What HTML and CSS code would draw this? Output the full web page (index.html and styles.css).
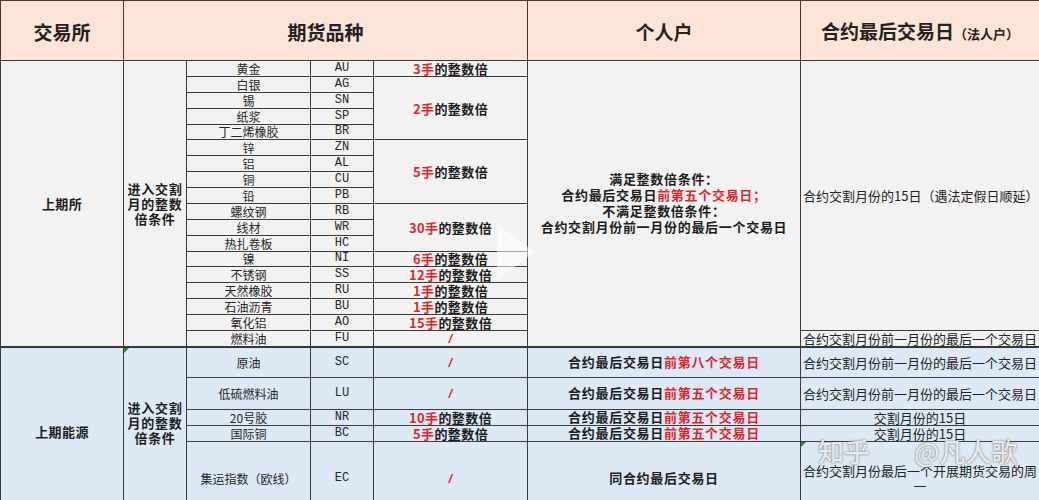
FILE: index.html
```html
<!DOCTYPE html>
<html lang="zh-CN">
<head>
<meta charset="utf-8">
<title>期货交割月持仓规定</title>
<link rel="stylesheet" href="styles.css">
</head>
<body>
<div class="sheet">
  <div class="grp hd">
    <div class="cell"><span>交易所</span></div>
    <div class="cell c4"><span>期货品种</span></div>
    <div class="cell"><span>个人户</span></div>
    <div class="cell"><span>合约最后交易日<span class="sm">（法人户）</span></span></div>
  </div>

  <div class="grp s1">
    <div class="cell r18 ex"><span>上期所</span></div>
    <div class="cell r18 cond"><span>进入交割月的整数倍条件</span></div>
    <div class="cell nm"><span>黄金</span></div><div class="cell cd"><span>AU</span></div><div class="cell mul"><span><span class="red">3手</span>的整数倍</span></div>
    <div class="cell r18 per"><span><span class="ln">满足整数倍条件：</span><span class="ln">合约最后交易日<span class="red">前第五个交易日；</span></span><span class="ln">不满足整数倍条件：</span><span class="ln">合约交割月份前一月份的最后一个交易日</span></span></div>
    <div class="cell r17 corp left"><span>合约交割月份的15日（遇法定假日顺延）</span></div>
    <div class="cell nm"><span>白银</span></div><div class="cell cd"><span>AG</span></div><div class="cell mul r4"><span><span class="red">2手</span>的整数倍</span></div>
    <div class="cell nm"><span>锡</span></div><div class="cell cd"><span>SN</span></div>
    <div class="cell nm"><span>纸浆</span></div><div class="cell cd"><span>SP</span></div>
    <div class="cell nm"><span>丁二烯橡胶</span></div><div class="cell cd"><span>BR</span></div>
    <div class="cell nm"><span>锌</span></div><div class="cell cd"><span>ZN</span></div><div class="cell mul r4"><span><span class="red">5手</span>的整数倍</span></div>
    <div class="cell nm"><span>铝</span></div><div class="cell cd"><span>AL</span></div>
    <div class="cell nm"><span>铜</span></div><div class="cell cd"><span>CU</span></div>
    <div class="cell nm"><span>铅</span></div><div class="cell cd"><span>PB</span></div>
    <div class="cell nm"><span>螺纹钢</span></div><div class="cell cd"><span>RB</span></div><div class="cell mul r3"><span><span class="red">30手</span>的整数倍</span></div>
    <div class="cell nm"><span>线材</span></div><div class="cell cd"><span>WR</span></div>
    <div class="cell nm"><span>热扎卷板</span></div><div class="cell cd"><span>HC</span></div>
    <div class="cell nm"><span>镍</span></div><div class="cell cd"><span>NI</span></div><div class="cell mul"><span><span class="red">6手</span>的整数倍</span></div>
    <div class="cell nm"><span>不锈钢</span></div><div class="cell cd"><span>SS</span></div><div class="cell mul"><span><span class="red">12手</span>的整数倍</span></div>
    <div class="cell nm"><span>天然橡胶</span></div><div class="cell cd"><span>RU</span></div><div class="cell mul"><span><span class="red">1手</span>的整数倍</span></div>
    <div class="cell nm"><span>石油沥青</span></div><div class="cell cd"><span>BU</span></div><div class="cell mul"><span><span class="red">1手</span>的整数倍</span></div>
    <div class="cell nm"><span>氧化铝</span></div><div class="cell cd"><span>AO</span></div><div class="cell mul"><span><span class="red">15手</span>的整数倍</span></div>
    <div class="cell nm"><span>燃料油</span></div><div class="cell cd"><span>FU</span></div><div class="cell mul"><span class="red slash">/</span></div>
    <div class="cell corp"><span>合约交割月份前一月份的最后一个交易日</span></div>
  </div>

  <div class="grp s2">
    <div class="cell r5 ex top"><span>上期能源</span></div>
    <div class="cell r5 cond top lift flag"><span>进入交割月的整数倍条件</span></div>
    <div class="cell nm top"><span>原油</span></div><div class="cell cd top"><span>SC</span></div><div class="cell mul top"><span class="red slash">/</span></div>
    <div class="cell per top"><span>合约最后交易日<span class="red">前第八个交易日</span></span></div>
    <div class="cell corp top"><span>合约交割月份前一月份的最后一个交易日</span></div>

    <div class="cell nm"><span>低硫燃料油</span></div><div class="cell cd"><span>LU</span></div><div class="cell mul"><span class="red slash">/</span></div>
    <div class="cell per"><span>合约最后交易日<span class="red">前第五个交易日</span></span></div>
    <div class="cell corp"><span>合约交割月份前一月份的最后一个交易日</span></div>

    <div class="cell nm"><span>20号胶</span></div><div class="cell cd"><span>NR</span></div><div class="cell mul"><span><span class="red">10手</span>的整数倍</span></div>
    <div class="cell per"><span>合约最后交易日<span class="red">前第五个交易日</span></span></div>
    <div class="cell corp"><span>交割月份的15日</span></div>

    <div class="cell nm"><span>国际铜</span></div><div class="cell cd"><span>BC</span></div><div class="cell mul"><span><span class="red">5手</span>的整数倍</span></div>
    <div class="cell per"><span>合约最后交易日<span class="red">前第五个交易日</span></span></div>
    <div class="cell corp"><span>交割月份的15日</span></div>

    <div class="cell nm"><span>集运指数（欧线）</span></div><div class="cell cd"><span>EC</span></div><div class="cell mul"><span class="red slash">/</span></div>
    <div class="cell per"><span>同合约最后交易日</span></div>
    <div class="cell corp lift flag"><span>合约交割月份最后一个开展期货交易的周一</span></div>
  </div>

  <div class="play" aria-hidden="true"></div>
  <div class="wm" aria-hidden="true"><span>知乎</span><span class="wm-b">@凡人歌</span></div>
</div>
</body>
</html>
```

FILE: styles.css
```css
html, body {
  margin: 0;
  background: #ffffff;
}

body {
  height: 500px;
  overflow: hidden;
  font-family: "Noto Sans CJK SC", "Noto Sans", sans-serif;
  color: #1c1c1c;
}

.sheet {
  position: relative;
  display: grid;
  width: 1039px;
  box-sizing: border-box;
  padding: 1px 0 0 1px;
  gap: 1px;
  background: #3b3b3b;
  grid-template-columns: 122px 62px 123px 62px 153px 272px 238px;
  grid-template-rows: 59px repeat(18, 14.89px) 30px 31px 15px 15px 73px;
}

.grp {
  display: contents;
}

.cell {
  position: relative;
  box-sizing: border-box;
  display: flex;
  align-items: center;
  justify-content: center;
  text-align: center;
  font-size: 12px;
  line-height: 15px;
  min-width: 0;
  min-height: 0;
}

.cell > span {
  display: block;
  white-space: normal;
}

.hd > .cell {
  background: #fce4d6;
  font-size: 19px;
  line-height: 24px;
  font-weight: 700;
  color: #222;
  padding-top: 3px;
}

.hd .sm {
  font-size: 13px;
}

.s1 > .cell {
  background: #f2f2f2;
}

.s2 > .cell {
  background: #dde9f5;
}

.c4 { grid-column: span 4; }
.r18 { grid-row: span 18; }
.r17 { grid-row: span 17; }
.r5 { grid-row: span 5; }
.r4 { grid-row: span 4; }
.r3 { grid-row: span 3; }

.top {
  border-top: 1px solid #333;
}

.ex {
  font-size: 13px;
  font-weight: 700;
  letter-spacing: 0.4px;
}

.cond {
  font-size: 13px;
  font-weight: 700;
  letter-spacing: 0.7px;
  line-height: 15px;
  padding: 0 2px;
}

.lift {
  padding-bottom: 18px;
}

.nm {
  font-size: 12px;
  color: #262626;
}

.cd {
  font-family: "Liberation Mono", monospace;
  font-size: 12px;
  color: #262626;
}

.mul {
  font-size: 13px;
  font-weight: 700;
  letter-spacing: 0.4px;
  white-space: nowrap;
}

.mul > span {
  white-space: nowrap;
}

.red {
  color: #e2262b;
}

.slash {
  font-family: "Liberation Sans", sans-serif;
  font-style: italic;
  font-weight: 700;
  font-size: 13px;
}

.per {
  font-size: 13px;
  font-weight: 700;
  letter-spacing: 0.7px;
  line-height: 16px;
  white-space: nowrap;
}

.per > span {
  white-space: nowrap;
}

.per .ln {
  display: block;
}

.corp {
  font-size: 13px;
  color: #222;
  padding: 0 1px;
}

.left {
  justify-content: flex-start;
  text-align: left;
  padding-left: 2px;
}

.flag::before {
  content: "";
  position: absolute;
  left: 0;
  top: 0;
  border-top: 5px solid #1e8a3c;
  border-right: 5px solid transparent;
}

.play {
  position: absolute;
  left: 497px;
  top: 224px;
  width: 38px;
  height: 56px;
  background: rgba(255, 255, 255, 0.55);
  clip-path: polygon(0 0, 100% 50%, 0 100%);
  pointer-events: none;
}

.wm {
  position: absolute;
  left: 818px;
  top: 434px;
  font-family: "Noto Sans CJK SC", sans-serif;
  font-size: 26px;
  font-weight: 500;
  line-height: 34px;
  color: rgba(255, 255, 255, 0.88);
  text-shadow: 0 0 1px rgba(0, 0, 0, 0.55), 0 0 3px rgba(0, 0, 0, 0.25);
  white-space: nowrap;
  pointer-events: none;
}

.wm-b {
  margin-left: 44px;
}
```
